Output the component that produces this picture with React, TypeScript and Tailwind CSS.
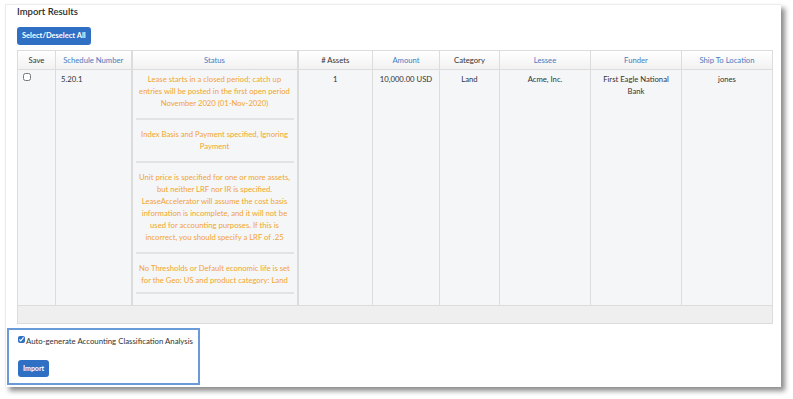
import { useState } from "react";

const columns = [
  { label: "Save", link: false, w: "w-[38px]" },
  { label: "Schedule Number", link: true, w: "w-[76px]" },
  { label: "Status", link: true, w: "w-[166px]" },
  { label: "# Assets", link: false, w: "w-[75px]" },
  { label: "Amount", link: true, w: "w-[67px]" },
  { label: "Category", link: false, w: "w-[60px]" },
  { label: "Lessee", link: true, w: "w-[91px]" },
  { label: "Funder", link: true, w: "w-[91px]" },
  { label: "Ship To Location", link: true, w: "w-[91px]" },
];

const messages = [
  "Lease starts in a closed period; catch up entries will be posted in the first open period November 2020 (01-Nov-2020)",
  "Index Basis and Payment specified, Ignoring Payment",
  "Unit price is specified for one or more assets, but neither LRF nor IR is specified. LeaseAccelerator will assume the cost basis information is incomplete, and it will not be used for accounting purposes. If this is incorrect, you should specify a LRF of .25",
  "No Thresholds or Default economic life is set for the Geo: US and product category: Land",
];

export default function App() {
  const [save, setSave] = useState(false);
  const [autoGen, setAutoGen] = useState(true);

  return (
    <div className="w-[793px] h-[399px] bg-white pt-[4px] pl-[5px] font-['Lato',_sans-serif]">
      <div className="w-[776px] h-[383px] bg-white border-l border-t border-[#ececec] shadow-[4px_4px_5px_rgba(0,0,0,0.45)]">
        {/* Header */}
        <div className="pl-[11px]">
          <h2 className="text-[9.5px] leading-[12px] pt-[1px] font-semibold text-[#2b2b2b]">Import Results</h2>
          <button className="mt-[9px] h-[18px] px-[5px] rounded-[3px] bg-[#2f6fc4] text-white text-[7.5px] font-bold leading-[18px]">
            Select/Deselect All
          </button>
        </div>

        {/* Table */}
        <div className="ml-[11px] mt-[5px] w-[756px]">
          <table className="table-fixed w-full border-collapse text-[7.7px] leading-[12px]">
            <thead>
              <tr className="h-[19px] bg-gradient-to-b from-white to-[#f1f1f1]">
                {columns.map((c, i) => (
                  <th
                    key={c.label}
                    className={`${c.w} font-normal text-center border border-[#dcdcdc] ${
                      i === 2 ? "border-x-2" : ""
                    } ${c.link ? "text-[#4a7cc0]" : "text-[#333]"}`}
                  >
                    {c.label}
                  </th>
                ))}
              </tr>
            </thead>
            <tbody className="text-[#333]">
              <tr className="bg-[#f5f6f8] align-top">
                <td className="border border-[#dcdcdc] pl-[5px] pt-[2px]">
                  <input
                    type="checkbox"
                    checked={save}
                    onChange={() => setSave(!save)}
                    className="w-[8px] h-[8px] m-0"
                  />
                </td>
                <td className="border border-[#dcdcdc] pl-[5px] pt-[3px]">5.20.1</td>
                <td className="border border-x-2 border-[#dcdcdc] px-[3px] pt-[3px] pb-[11px]">
                  {messages.map((m) => (
                    <div
                      key={m}
                      className="text-center text-[#f2a52e] pb-[9px] mb-[8px] border-b-2 border-[#e2e3e5] last:mb-0 last:pb-[6px]"
                    >
                      {m}
                    </div>
                  ))}
                </td>
                <td className="border border-[#dcdcdc] text-center pt-[3px]">1</td>
                <td className="border border-[#dcdcdc] text-center pt-[3px]">10,000.00 USD</td>
                <td className="border border-[#dcdcdc] text-center pt-[3px]">Land</td>
                <td className="border border-[#dcdcdc] text-center pt-[3px]">Acme, Inc.</td>
                <td className="border border-[#dcdcdc] text-center pt-[3px] px-[10px]">First Eagle National Bank</td>
                <td className="border border-[#dcdcdc] text-center pt-[3px]">jones</td>
              </tr>
              <tr className="h-[18px] bg-[#efefef]">
                <td colSpan={9} className="border border-[#dcdcdc]" />
              </tr>
            </tbody>
          </table>
        </div>

        {/* Import options */}
        <div className="ml-[1px] mt-[4px] w-[193px] h-[57px] border-2 border-[#6a9bd8] pl-[9px] pt-[5px]">
          <label className="flex items-center gap-[1px] text-[7.8px] leading-[12px] text-[#333]">
            <input
              type="checkbox"
              checked={autoGen}
              onChange={() => setAutoGen(!autoGen)}
              className="w-[7px] h-[7px] m-0 mb-[3px] accent-[#2f6fc4]"
            />
            Auto-generate Accounting Classification Analysis
          </label>
          <button className="mt-[13px] h-[17px] px-[5px] rounded-[3px] bg-[#2f6fc4] text-white text-[7px] font-bold leading-[17px]">
            Import
          </button>
        </div>
      </div>
    </div>
  );
}
